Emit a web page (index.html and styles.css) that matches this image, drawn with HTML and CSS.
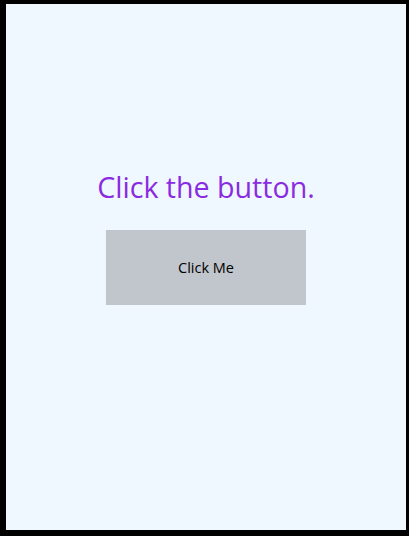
FILE: index.html
```html
<!DOCTYPE html>
<html lang="en">
<head>
    <meta charset="UTF-8">
    <meta name="viewport" content="width=device-width, initial-scale=1.0">
    <title>Click the button</title>
    <link rel="stylesheet" href="styles.css">
</head>
<body>
    <div class="window">
        <h1 class="message" id="message">Click the button.</h1>
        <button class="click-btn" id="btn">Click Me</button>
    </div>
</body>
</html>
```

FILE: styles.css
```css
html, body {
    margin: 0;
    height: 100%;
}
body {
    background-color: #000;
    font-family: "Open Sans", "Noto Sans", sans-serif;
    padding: 4px 3px 6px 6px;
    box-sizing: border-box;
}
.window {
    height: 100%;
    background-color: #f0f8ff;
    display: flex;
    flex-direction: column;
    align-items: center;
    padding-top: 163px;
    box-sizing: border-box;
}
.message {
    margin: 0;
    font-size: 28.6px;
    font-weight: normal;
    line-height: 40px;
    color: #8a2be2;
}
.click-btn {
    margin-top: 23px;
    width: 200px;
    height: 75px;
    border: none;
    background-color: #c1c5cc;
    font-family: "Open Sans", "Noto Sans", sans-serif;
    font-size: 14.5px;
    color: #000;
    cursor: pointer;
}
```
